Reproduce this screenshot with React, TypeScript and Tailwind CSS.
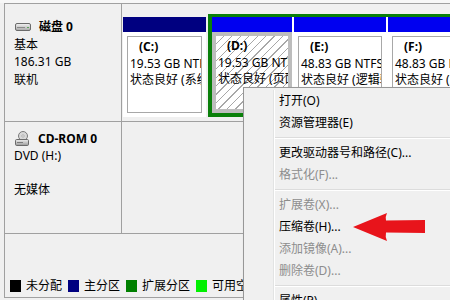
import React from 'react';

const font = "font-['Noto_Sans','Noto_Sans_CJK_SC',sans-serif]";

const DiskIcon = () => (
    <svg width="16" height="8" viewBox="0 0 16 8" className="block">
        <defs>
            <linearGradient id="dg" x1="0" y1="0" x2="0" y2="1">
                <stop offset="0" stopColor="#f4f4f4" />
                <stop offset="1" stopColor="#a8a8a8" />
            </linearGradient>
        </defs>
        <rect x="0.5" y="0.5" width="15" height="7" rx="1.5" fill="url(#dg)" stroke="#6b6b6b" />
        <rect x="2" y="4" width="8" height="1" fill="#8a8a8a" />
        <rect x="12" y="4" width="2" height="1" fill="#5aa05a" />
    </svg>
);

const CdIcon = () => (
    <svg width="14" height="15" viewBox="0 0 14 15" className="block">
        <defs>
            <linearGradient id="cg" x1="0" y1="0" x2="0" y2="1">
                <stop offset="0" stopColor="#f0f0f0" />
                <stop offset="1" stopColor="#9a9a9a" />
            </linearGradient>
        </defs>
        <circle cx="8" cy="5" r="4.5" fill="#d8d8d8" stroke="#7a7a7a" />
        <circle cx="8" cy="5" r="1.2" fill="#f8f8f8" stroke="#8a8a8a" strokeWidth="0.6" />
        <rect x="0.5" y="8.5" width="13" height="6" rx="1.2" fill="url(#cg)" stroke="#6b6b6b" />
        <rect x="2" y="11" width="6" height="1" fill="#7c7c7c" />
    </svg>
);

type Part = { letter: string; size: string; status: string; width: string; primary?: boolean; selected?: boolean };

const Cell = ({ p }: { p: Part }) => (
    <div className={`flex flex-col flex-none ${p.width}`}>
        <div className={`h-[15px] ${p.primary ? 'bg-[#000080]' : 'bg-[#0000f0]'}`} />
        {p.selected ? (
            <div className="flex-1 border-[4px] border-[#bdbdbd] bg-[repeating-linear-gradient(135deg,#ffffff_0px,#ffffff_5px,#a8a8a8_5px,#a8a8a8_6px)] overflow-hidden">
                <CellText p={p} />
            </div>
        ) : (
            <div className="flex-1 bg-white p-[4px] flex">
                <div className="flex-1 border border-[#a8a8a8] overflow-hidden">
                    <CellText p={p} />
                </div>
            </div>
        )}
    </div>
);

const CellText = ({ p }: { p: Part }) => (
    <div className="pl-[2px] pt-[2px] text-[12px] leading-[16.5px] text-black whitespace-nowrap">
        <div className="font-bold pl-[9px]">{p.letter}</div>
        <div>{p.size}</div>
        <div>{p.status}</div>
    </div>
);

const MenuItem = ({ label, disabled }: { label: string; disabled?: boolean }) => (
    <div className={`h-[22px] flex items-center pl-[35px] text-[12px] whitespace-nowrap ${disabled ? 'text-[#8d8d8d]' : 'text-black'}`}>
        {label}
    </div>
);

const Sep = () => (
    <div className="h-[8px] flex flex-col justify-center ml-[30px]">
        <div className="h-px bg-[#dcdcdc]" />
        <div className="h-px bg-white" />
    </div>
);

const Legend = ({ color, label }: { color: string; label: string }) => (
    <div className="flex items-center gap-[5px]">
        <div className={`w-[11px] h-[12px] ${color}`} />
        <span className="text-[12px] leading-[14px] text-black">{label}</span>
    </div>
);

export default function App() {
    return (
        <div className={`relative w-[450px] h-[300px] overflow-hidden bg-[#f0f0f0] ${font}`}>
            <div className="h-[3px] bg-[#f7f7f7]" />
            <div className="ml-[4px] h-[295px] border-l border-t border-b border-[#a0a0a0] flex flex-col">
                {/* disk 0 */}
                <div className="h-[118px] flex-none flex border-b border-[#a0a0a0]">
                    <div className="w-[117px] flex-none border-r border-[#a0a0a0] pl-[9px] pt-[14px] text-[12px] leading-[17.5px] text-black">
                        <div className="flex items-center">
                            <div className="ml-[1px] mr-[8px]"><DiskIcon /></div>
                            <span className="font-bold">磁盘 0</span>
                        </div>
                        <div>基本</div>
                        <div>186.31 GB</div>
                        <div>联机</div>
                    </div>
                    <div className="flex-1 flex items-start pl-[1px] pt-[10px] overflow-hidden">
                        <div className="w-[83px] h-[103px] pt-[3px] flex flex-none">
                            <Cell p={{ letter: '(C:)', size: '19.53 GB NTFS', status: '状态良好 (系统)', width: 'w-[83px]', primary: true }} />
                        </div>
                        <div className="ml-[2px] w-[300px] h-[103px] flex-none flex gap-[2px] border-l-[4px] border-t-[3px] border-b-[4px] border-[#0a800a] bg-white">
                            <Cell p={{ letter: '(D:)', size: '19.53 GB NTFS', status: '状态良好 (页面文件)', width: 'w-[80px]', selected: true }} />
                            <Cell p={{ letter: '(E:)', size: '48.83 GB NTFS', status: '状态良好 (逻辑驱动器)', width: 'w-[92px]' }} />
                            <Cell p={{ letter: '(F:)', size: '48.83 GB NTFS', status: '状态良好 (逻辑驱动器)', width: 'w-[92px]' }} />
                        </div>
                    </div>
                </div>
                {/* cd-rom */}
                <div className="h-[112px] flex-none flex border-b border-[#a0a0a0]">
                    <div className="w-[117px] flex-none border-r border-[#a0a0a0] pl-[9px] pt-[5px] text-[12px] leading-[17px] text-black">
                        <div className="flex items-end h-[20px]">
                            <div className="ml-[1px] mr-[9px] mb-[1px]"><CdIcon /></div>
                            <span className="font-bold">CD-ROM 0</span>
                        </div>
                        <div>DVD (H:)</div>
                        <div className="h-[17px]" />
                        <div>无媒体</div>
                    </div>
                    <div className="flex-1" />
                </div>
                {/* legend */}
                <div className="flex-1 flex items-end pl-[5px] pb-[4px] gap-[6px] whitespace-nowrap">
                    <Legend color="bg-black" label="未分配" />
                    <Legend color="bg-[#000080]" label="主分区" />
                    <Legend color="bg-[#008000]" label="扩展分区" />
                    <Legend color="bg-[#00f000]" label="可用空间" />
                </div>
            </div>

            {/* context menu */}
            <div className="absolute left-[243px] top-[87px] w-[230px] h-[240px] border border-[#979797] bg-[#f0f0f0] pt-[2px] shadow-[2px_2px_3px_rgba(0,0,0,0.25)]">
                <div className="absolute left-[29px] top-[2px] bottom-0 w-px bg-[#e2e3e3]" />
                <div className="absolute left-[30px] top-[2px] bottom-0 w-px bg-white" />
                <MenuItem label="打开(O)" />
                <MenuItem label="资源管理器(E)" />
                <Sep />
                <MenuItem label="更改驱动器号和路径(C)..." />
                <MenuItem label="格式化(F)..." disabled />
                <Sep />
                <MenuItem label="扩展卷(X)..." disabled />
                <MenuItem label="压缩卷(H)..." />
                <MenuItem label="添加镜像(A)..." disabled />
                <MenuItem label="删除卷(D)..." disabled />
                <Sep />
                <MenuItem label="属性(P)" />
            </div>

            {/* red arrow */}
            <svg className="absolute left-[350px] top-[210px]" width="80" height="35" viewBox="0 0 80 35">
                <path d="M3 17 L37 3 Q35 7 36 10.5 L75 10 L75 23 L36 22.5 Q35 27 37 31 Z" fill="#e8141b" />
            </svg>
        </div>
    );
}
